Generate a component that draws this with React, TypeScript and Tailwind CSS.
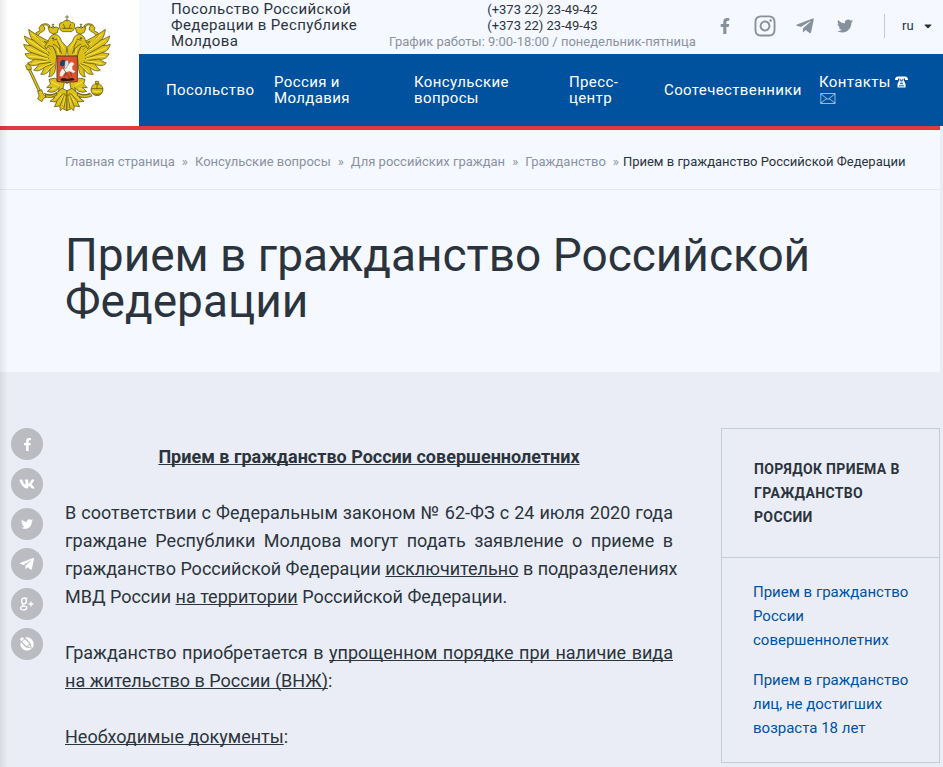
import type { ReactNode } from "react";
import { FaCaretDown, FaFacebookF, FaInstagram, FaTwitter, FaVk } from "react-icons/fa";
import { FaTelegramPlane } from "react-icons/fa";

const navItems = [
  { label: "Посольство", width: "w-[88px]" },
  { label: "Россия и Молдавия", width: "w-[120px]" },
  { label: "Консульские вопросы", width: "w-[135px]" },
  { label: "Пресс-центр", width: "w-[75px]" },
  { label: "Соотечественники", width: "w-[135px]" },
];

const crumbs = [
  "Главная страница",
  "Консульские вопросы",
  "Для российских граждан",
  "Гражданство",
];

const sideLinks = [
  "Прием в гражданство России совершеннолетних",
  "Прием в гражданство лиц, не достигших возраста 18 лет",
];

// One half of the eagle, the other one is mirrored around x=201
function EagleHalf() {
  return (
    <g fill="#dcc01a" stroke="#4d4208" strokeWidth="2" strokeLinejoin="round">
      <path d="M148 82Q139 70 128 76Q137 80 134 90Q128 96 121 98L113 108L107 99L120 92L117 84L123 75Q138 66 150 77Z" />
      <path d="M156 132C145 120 118 112 86 88C88 105 93 114 98 120C86 115 79 111 73 108C76 124 84 132 94 137C84 136 77 135 71 133C75 148 83 155 95 158C86 160 80 161 75 161C80 174 90 179 103 178C95 184 89 187 83 189C92 200 106 198 116 193C111 202 106 207 101 210C113 216 125 210 132 202C129 212 126 219 122 223C136 225 145 217 150 208C149 219 149 225 146 231C158 229 164 220 166 209L170 164Z" />
      <path
        fill="none"
        d="M98 119L149 160M94 137L147 167M95 158L147 176M104 177L149 183M116 192L155 187M132 201L160 191M150 208L165 194M107 109L152 149"
      />
      <path
        fill="none"
        stroke="#f7e54c"
        strokeWidth="3"
        d="M95 102Q120 119 149 148M86 120Q114 139 144 157M83 143Q112 157 142 167M86 169Q117 170 144 176M97 191Q123 185 147 182M114 208Q139 195 157 188M136 217Q151 204 162 193"
      />
      <path d="M132 124L143 128Q148 106 164 102Q181 106 184 123L201 142L197 172L169 167Q170 150 159 140L145 137L139 147L134 139L140 132Z" />
      <path fill="none" d="M158 121L172 117M171 122Q184 139 180 158M158 132Q177 138 186 162" />
      <circle cx="159" cy="115" r="2" fill="#333" />
      <path fill="none" stroke="#f7e54c" strokeWidth="3" d="M173 110Q178 128 192 146M171 145L177 161" />
      <path d="M149 97L144 83Q151 78 159 84Q168 78 176 84L172 98L160 102Z" />
      <path d="M154 84Q159 74 165 84M159 82V71M155 74H163" fill="none" />
      <path d="M147 238Q164 230 178 240L193 248L188 270L173 281L178 263L166 274Q152 280 142 274L155 263L140 263L151 252Z" />
      <path fill="none" stroke="#f7e54c" strokeWidth="3" d="M154 246L178 257M151 269L167 264" />
      <path d="M133 280Q153 290 174 275L186 265L201 272V332L188 326L181 332L179 318L163 320L170 306L150 304L165 292L145 290Z" />
      <path fill="none" d="M167 306L190 280M180 318L194 280M192 325L198 283" />
      <path fill="none" stroke="#f7e54c" strokeWidth="2.5" d="M164 299L183 281M178 307L191 286M190 315L196 289" />
    </g>
  );
}

function Emblem() {
  return (
    <svg viewBox="69 42 264 294" className="h-[98px] w-[88px]" role="img" aria-label="Герб России">
      <EagleHalf />
      <g transform="matrix(-1 0 0 1 402 0)">
        <EagleHalf />
      </g>
      <g fill="#dcc01a" stroke="#4d4208" strokeWidth="2" strokeLinejoin="round">
        <path d="M180 89Q174 65 187 68Q201 52 215 68Q228 65 222 89L214 95H188Z" />
        <path d="M201 64V45M195 51H207M185 85H217M190 72L195 85M212 72L207 85" fill="none" />
        <path d="M84 207L90 205L121 270L115 274Z" />
        <path d="M113 274L125 269L130 283L140 291L131 295L126 305L113 297L117 287Z" />
        <path d="M77 197L83 191L93 199L94 208L82 210Z" />
        <path d="M136 284Q153 290 171 279L169 286Q151 297 137 291Z" />
        <path d="M233 279Q249 290 272 281L276 288Q252 298 232 287Z" />
        <circle cx="291" cy="269" r="18" />
        <path d="M273 266H309M291 267V252M280 281Q291 286 302 281" fill="none" />
        <path d="M286 251V244H296V251Z" />
      </g>
      <path d="M279 273Q289 277 299 274" fill="none" stroke="#f7e54c" strokeWidth="3" />
      <path
        d="M171 168H232V244Q225 246 209 246L201 250L193 246Q177 246 171 244Z"
        fill="#e2512f"
        stroke="#534116"
        strokeWidth="3"
      />
      <path d="M180 187L186 179L196 181L199 191L190 199L180 197Z" fill="#23405c" />
      <path
        d="M180 218L186 206L197 204L202 195L211 188L216 185L223 192L217 199L218 209L226 214L220 220L209 214L195 218L186 230L179 228Z"
        fill="#f4f1ea"
        stroke="#8c8174"
        strokeWidth="1"
      />
      <path d="M195 184L203 180L206 190L200 204L194 208Z" fill="#dadfe4" stroke="#5b6470" />
      <path d="M181 237Q193 231 201 237L218 233L225 240Q204 245 184 242Z" fill="#272016" />
      <path d="M188 203L211 237M197 218L194 230M212 216L214 228" stroke="#403822" strokeWidth="2" />
    </svg>
  );
}

function PhoneIcon() {
  return (
    <svg viewBox="0 0 13 12" className="inline-block h-3 w-[13px] align-[-1px]" aria-hidden="true">
      <path
        fill="currentColor"
        d="M0 4Q0 .8 3 .5H10Q13 .8 13 4H10V2.6H8.8V4.2L10.5 8V11.5H2.5V8L4.2 4.2V2.6H3V4Z"
      />
      <path fill="none" stroke="#00529f" strokeWidth=".9" d="M5.2 2.8V4.4H7.8V2.8M4 9.8H9M5 7.7H8M5.5 6H7.5" />
    </svg>
  );
}

function GooglePlusIcon() {
  return (
    <svg viewBox="0 0 18 16" className="h-4 w-[18px]" fill="none" stroke="currentColor">
      <ellipse cx="6" cy="5" rx="2.4" ry="2.9" strokeWidth="1.4" />
      <path d="M6 2.1H9.8" strokeWidth="1" />
      <path
        d="M5 7.9Q3.7 9.2 5.5 9.8Q9 10.2 8.8 11.9Q8.5 13.9 5.7 13.9Q2.6 13.9 2.6 12.2Q2.6 10.6 5.5 9.8"
        strokeWidth="1.3"
      />
      <path d="M13 5.5V10.5M10.5 8H15.5" strokeWidth="1.3" />
    </svg>
  );
}

function LiveJournalIcon() {
  return (
    <svg viewBox="0 0 16 16" className="h-4 w-4">
      <path
        fill="currentColor"
        d="M6 1.6Q9 .7 12 2.8Q15.8 6.3 14.1 11Q11.2 15.4 6.4 14.4Q1.7 12.8 1.4 8.5Q1.4 7.4 1.8 6.2L7 11.6L12.6 12.5L11.5 7Z"
      />
      <path fill="currentColor" d="M.8 3.2L3.2.9L5.1 2.7L2.5 5.2ZM5.6 3.2L10.4 7.6L7.8 10.2L3 5.7ZM10.8 8.8L11.5 11.5L8.8 10.7Z" />
    </svg>
  );
}

function ShareButton({ label, children }: { label: string; children: ReactNode }) {
  return (
    <button
      aria-label={label}
      className="flex h-8 w-8 items-center justify-center rounded-full bg-[#bbbcc2] text-white"
    >
      {children}
    </button>
  );
}

function Header() {
  return (
    <header className="flex">
      <a href="#" className="flex w-[139px] shrink-0 justify-center bg-white pt-[14px] pr-[5px]">
        <Emblem />
      </a>
      <div className="min-w-0 flex-1">
        <div className="flex h-[54px] bg-[#f5f8ff] pl-8">
          <p className="w-[190px] shrink-0 pt-px text-[15px] leading-4 tracking-wide">
            Посольство Российской Федерации в Республике Молдова
          </p>
          <div className="ml-7 shrink-0 pt-0.5 text-center text-[13px] leading-4">
            <p>(+373 22) 23-49-42</p>
            <p>(+373 22) 23-49-43</p>
            <p className="text-[#8a929e]">График работы: 9:00-18:00 / понедельник-пятница</p>
          </div>
          <div className="ml-auto flex items-center pr-[9px] pb-0.5 text-[#87919d]">
            <a href="#" aria-label="Facebook" className="flex w-10 justify-center">
              <FaFacebookF className="h-4 w-4" />
            </a>
            <a href="#" aria-label="Instagram" className="flex w-10 justify-center">
              <FaInstagram className="h-6 w-6" />
            </a>
            <a href="#" aria-label="Telegram" className="flex w-10 justify-center">
              <FaTelegramPlane className="h-5 w-5" />
            </a>
            <a href="#" aria-label="Twitter" className="flex w-10 justify-center">
              <FaTwitter className="h-4 w-4" />
            </a>
            <div className="ml-[19px] flex h-6 items-center border-l border-[#c3c9d4] pl-[17px] text-[#28323b]">
              <select aria-label="Язык" className="w-5 appearance-none bg-transparent text-[13px]">
                <option>ru</option>
              </select>
              <FaCaretDown className="h-3 w-3" />
            </div>
          </div>
        </div>
        <nav className="flex h-[72px] items-center gap-5 bg-[#00529f] pl-[27px] text-[15px] leading-4 tracking-wide text-white">
          {navItems.map((item) => (
            <a key={item.label} href="#" className={item.width + " shrink-0"}>
              {item.label}
            </a>
          ))}
          <a href="#" className="w-[100px] shrink-0">
            Контакты <PhoneIcon /> 🖂
          </a>
        </nav>
      </div>
    </header>
  );
}

function Sidebar() {
  return (
    <aside className="w-[219px] shrink-0 self-start border border-[#c5ccda]">
      <h2 className="border-b border-[#c5ccda] px-8 py-7 text-sm leading-6 font-bold tracking-wide uppercase">
        Порядок приема в гражданство России
      </h2>
      <ul className="flex flex-col gap-4 py-[22px] pr-6 pl-[31px] text-[15px] leading-6 text-[#00529f]">
        {sideLinks.map((link) => (
          <li key={link}>
            <a href="#">{link}</a>
          </li>
        ))}
      </ul>
    </aside>
  );
}

function App() {
  return (
    <div className="relative min-h-screen bg-[#eaedf5] font-[Roboto,'DejaVu_Sans',sans-serif] text-[#2b343c]">
      <Header />
      <div className="mr-[3px] border-t-4 border-[#e0393e] bg-[#f5f8ff]">
        <nav className="flex h-[60px] items-center border-b border-[#e4e8f1] pt-1 pl-[65px] text-[13px] whitespace-nowrap">
          {crumbs.map((crumb, i) => (
            <span key={crumb} className="text-[#8a929e]">
              <a href="#">{crumb}</a>
              <span className={i < crumbs.length - 1 ? "mx-[7px]" : "mr-1 ml-[7px]"}>»</span>
            </span>
          ))}
          <span>Прием в гражданство Российской Федерации</span>
        </nav>
        <h1 className="px-[65px] pt-[42px] pb-12 text-[46px] leading-[46px]">
          Прием в гражданство Российской Федерации
        </h1>
      </div>
      <main className="mr-[3px] flex pt-14 pl-[11px]">
        <div className="mr-[22px] flex shrink-0 flex-col gap-2">
          <ShareButton label="Facebook">
            <FaFacebookF className="h-[13px] w-[13px]" />
          </ShareButton>
          <ShareButton label="ВКонтакте">
            <FaVk className="h-4 w-4" />
          </ShareButton>
          <ShareButton label="Twitter">
            <FaTwitter className="h-3 w-3" />
          </ShareButton>
          <ShareButton label="Telegram">
            <FaTelegramPlane className="h-4 w-4" />
          </ShareButton>
          <ShareButton label="Google Plus">
            <GooglePlusIcon />
          </ShareButton>
          <ShareButton label="LiveJournal">
            <LiveJournalIcon />
          </ShareButton>
        </div>
        <article className="mr-12 flex min-w-0 flex-1 flex-col gap-7 pt-[15px] text-justify text-lg leading-7 [text-decoration-skip-ink:none]">
          <p className="text-center font-bold underline">Прием в гражданство России совершеннолетних</p>
          <p>
            В соответствии с Федеральным законом № 62-ФЗ с 24 июля 2020 года граждане Республики Молдова
            могут подать заявление о приеме в{" "}
            <span className="whitespace-nowrap">
              гражданство Российской Федерации <u>исключительно</u> в подразделениях
            </span>{" "}
            МВД России <u>на территории</u> Российской Федерации.
          </p>
          <p>
            Гражданство приобретается в <u>упрощенном порядке при наличие вида на жительство в России (ВНЖ)</u>:
          </p>
          <p>
            <u>Необходимые документы</u>:
          </p>
        </article>
        <Sidebar />
      </main>
      <div className="pointer-events-none absolute inset-y-0 left-0 w-2 bg-linear-to-r from-black/8 to-transparent" />
    </div>
  );
}

export default App;
